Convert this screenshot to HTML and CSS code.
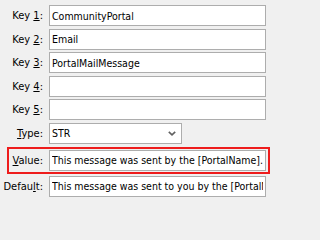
FILE: index.html
```html
<!DOCTYPE html>
<html>
<head>
<meta charset="utf-8">
<link rel="stylesheet" href="styles.css">
</head>
<body>
<div class="form">
  <div class="row"><label class="lbl">Key <u>1</u>:</label><input class="field" value="CommunityPortal"></div>
  <div class="row"><label class="lbl">Key <u>2</u>:</label><input class="field" value="Email"></div>
  <div class="row"><label class="lbl">Key <u>3</u>:</label><input class="field" value="PortalMailMessage"></div>
  <div class="row"><label class="lbl">Key <u>4</u>:</label><input class="field" value=""></div>
  <div class="row"><label class="lbl">Key <u>5</u>:</label><input class="field" value=""></div>
  <div class="row"><label class="lbl"><u>T</u>ype:</label>
    <div class="select"><span class="select-text">STR</span>
      <svg class="chev" width="8" height="5" viewBox="0 0 8 5"><path d="M0.8 0.8 L4 3.8 L7.2 0.8" fill="none" stroke="#606060" stroke-width="1.6"/></svg>
    </div>
  </div>
  <div class="row highlight"><label class="lbl"><u>V</u>alue:</label><input class="field" value="This message was sent by the [PortalName]."></div>
  <div class="row"><label class="lbl">Defau<u>l</u>t:</label><input class="field" value="This message was sent to you by the [PortalName] portal."></div>
</div>
</body>
</html>
```
FILE: styles.css
```css
html, body {
  margin: 0;
  padding: 0;
  background: #f0f0f0;
  width: 271px;
  height: 202px;
  overflow: hidden;
}
.form {
  display: flex;
  flex-direction: column;
  gap: 2.6px;
  padding-top: 5px;
  font-family: "DejaVu Sans Condensed", "DejaVu Sans", sans-serif;
  font-size: 11px;
  color: #000;
}
.row {
  display: flex;
  align-items: center;
  gap: 5px;
  height: 21px;
}
.lbl {
  width: 44px;
  box-sizing: border-box;
  text-align: right;
  padding-right: 1px;
  white-space: nowrap;
}
.field {
  box-sizing: border-box;
  width: 217px;
  height: 21px;
  margin: 0;
  padding: 0 2px;
  border: 1px solid #adadad;
  background: #fff;
  font-family: inherit;
  font-size: 10.5px;
  color: #000;
  outline: none;
}
.select {
  box-sizing: border-box;
  width: 133px;
  height: 21px;
  border: 1px solid #adadad;
  background: #fff;
  display: flex;
  align-items: center;
  justify-content: space-between;
  padding: 0 5px 0 2px;
  font-size: 10.5px;
}
.chev { display: block; }
.highlight {
  margin-top: 0.4px;
  margin-left: 7px;
  width: 263px;
  height: 27px;
  box-sizing: border-box;
  border: 2px solid #ee1c1c;
  padding: 1px 2px 1px 0;
}
.highlight .lbl {
  width: 35px;
}
.highlight + .row {
  margin-top: -0.6px;
}
```
